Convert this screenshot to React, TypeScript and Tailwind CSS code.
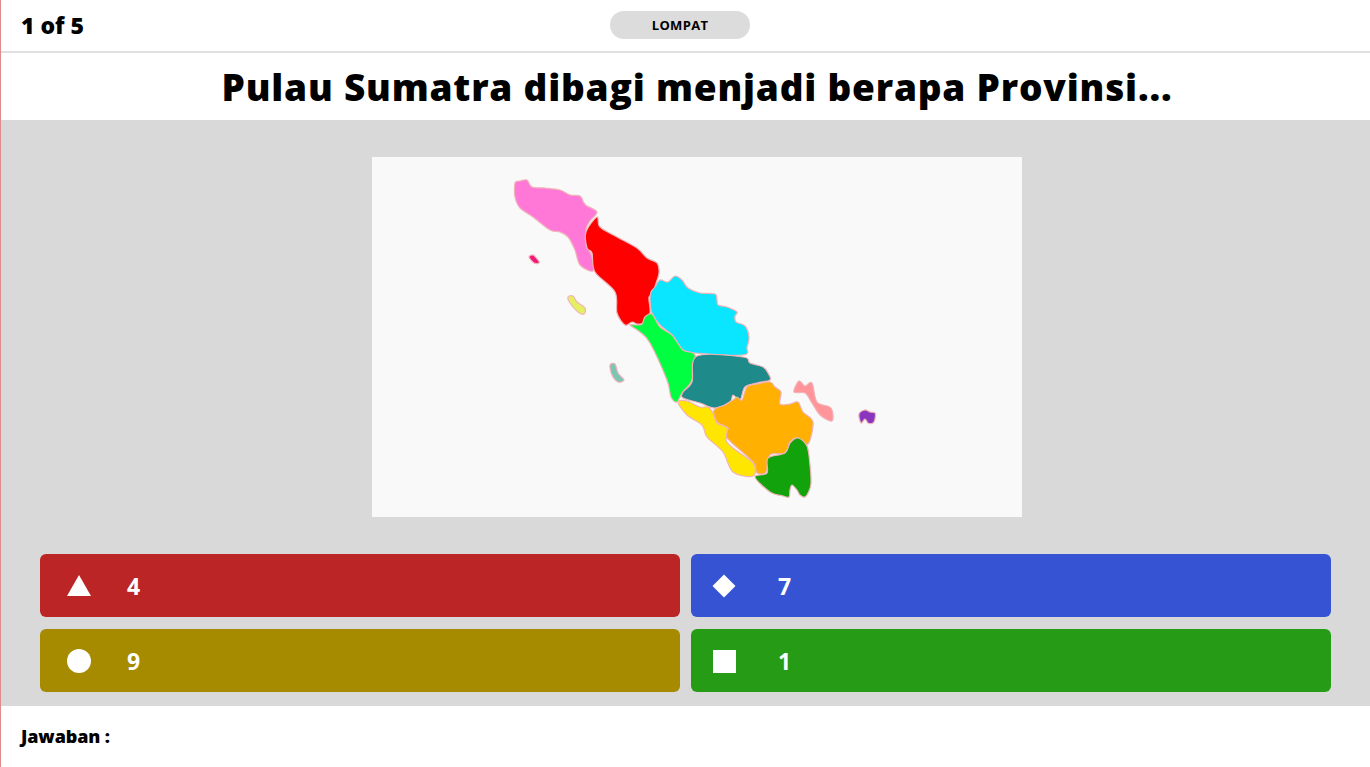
type Pt = [number, number];

// page coordinates, the svg viewBox starts at the image corner
const regions: { fill: string; pts: Pt[] }[] = [
  { fill: "#ff78d8", pts: [[515,183],[520,181],[527,180],[532,187],[545,188],[560,190],[570,195],[580,196],[584,203],[587,206],[597,212],[590,221],[586,229],[588,240],[588,248],[592,257],[593,271],[580,265],[575,250],[568,237],[560,232],[550,230],[533,217],[520,208],[515,197]] },
  { fill: "#ff0000", pts: [[597,217],[600,227],[617,237],[637,248],[647,258],[657,263],[659,273],[655,287],[655,295],[649,297],[650,313],[643,323],[637,324],[632,322],[625,325],[617,313],[615,292],[595,272],[592,253],[587,248],[586,232]] },
  { fill: "#0ae6ff", pts: [[660,280],[668,282],[675,276],[682,280],[688,288],[700,293],[715,294],[717,300],[718,305],[727,307],[737,312],[735,316],[736,322],[745,326],[749,337],[747,347],[743,355],[695,353],[683,350],[672,335],[660,325],[652,313],[650,300],[651,292],[655,287]] },
  { fill: "#00ff40", pts: [[630,325],[637,325],[642,324],[645,317],[652,314],[660,327],[672,335],[683,350],[695,355],[692,380],[682,393],[677,402],[671,397],[667,380],[650,343],[640,332]] },
  { fill: "#1f8a8a", pts: [[697,356],[743,357],[750,363],[763,367],[768,373],[770,380],[757,383],[745,387],[740,400],[733,395],[730,402],[715,408],[700,403],[683,398],[683,392],[692,382]] },
  { fill: "#ffb000", pts: [[770,382],[775,387],[781,392],[780,404],[790,404],[798,402],[803,412],[813,422],[808,444],[798,438],[790,442],[785,453],[770,455],[766,472],[757,473],[753,462],[732,443],[725,435],[728,428],[717,422],[714,410],[725,405],[733,400],[737,397],[742,400],[747,387],[757,384]] },
  { fill: "#ffe600", pts: [[678,402],[687,401],[700,407],[708,407],[713,413],[717,423],[727,428],[726,440],[733,448],[753,463],[753,476],[733,472],[723,452],[707,437],[702,425],[687,415]] },
  { fill: "#12a30c", pts: [[755,477],[767,473],[768,458],[785,453],[790,443],[798,438],[807,446],[810,465],[811,483],[809,491],[805,497],[800,495],[797,490],[792,485],[790,490],[789,497],[783,496],[770,492]] },
  { fill: "#ff9499", pts: [[794,392],[799,381],[805,386],[812,383],[817,402],[831,408],[832,421],[820,415],[812,403],[805,393]] },
  { fill: "#8a35c0", pts: [[859,414],[865,410],[870,412],[875,413],[875,419],[873,423],[868,423],[865,419],[861,423]] },
  { fill: "#7cc4b4", pts: [[610,365],[615,364],[618,373],[624,380],[618,382],[612,375]] },
  { fill: "#e4f060", pts: [[568,297],[573,296],[577,302],[585,308],[584,314],[578,312],[570,303]] },
  { fill: "#f0197a", pts: [[529,257],[533,255],[538,260],[539,263],[534,263]] },
];

// closed catmull-rom through the traced points
function smooth(p: Pt[]) {
  const n = p.length;
  let d = `M${p[0][0]} ${p[0][1]}`;
  for (let i = 0; i < n; i++) {
    const a = p[(i - 1 + n) % n];
    const b = p[i];
    const c = p[(i + 1) % n];
    const e = p[(i + 2) % n];
    const k = 0.16;
    d += `C${b[0] + (c[0] - a[0]) * k} ${b[1] + (c[1] - a[1]) * k} ${c[0] - (e[0] - b[0]) * k} ${c[1] - (e[1] - b[1]) * k} ${c[0]} ${c[1]}`;
  }
  return d + "Z";
}

const SumatraMap = () => (
  <svg viewBox="372 157 650 360" className="block w-[650px] h-[360px]">
    {regions.map((r, i) => (
      <path key={i} d={smooth(r.pts)} fill={r.fill} stroke="#f0b4b8" strokeWidth="1.2" strokeLinejoin="round" />
    ))}
  </svg>
);

const Triangle = () => (
  <svg viewBox="0 0 24 22" className="w-6 h-[22px]"><path d="M12 0 L24 21 L0 21 Z" fill="#fff" /></svg>
);
const Diamond = () => (
  <svg viewBox="0 0 24 24" className="w-6 h-6"><path d="M12 0.5 L23.5 12 L12 23.5 L0.5 12 Z" fill="#fff" /></svg>
);
const Circle = () => <div className="w-6 h-6 rounded-full bg-white" />;
const Square = () => <div className="w-[23px] h-[23px] bg-white" />;

const AnswerButton = ({ color, icon, label, inset, gap }: { color: string; icon: React.ReactNode; label: string; inset: string; gap: string }) => (
  <button className={`h-[63px] w-[640px] rounded-md flex items-center text-white font-bold text-[23px] ${inset} ${color}`}>
    <span className="w-6 flex justify-center">{icon}</span>
    <span className={gap}>{label}</span>
  </button>
);

const App = () => {
  return (
    <main className="h-[767px] w-full flex flex-col bg-white border-l border-[#e08c8c] overflow-hidden font-['Open_Sans',sans-serif] text-black">
      <div className="h-[53px] shrink-0 flex items-center relative border-b-2 border-[#e0e0e0] pl-5">
        <span className="font-extrabold text-[23px] -mt-[1px]">1 of 5</span>
        <div className="absolute left-[609px] top-[11px] w-[140px] h-7 pt-[2px] rounded-full bg-[#dcdcdc] flex items-center justify-center text-[13px] font-bold tracking-wide">LOMPAT</div>
      </div>

      <div className="h-[67px] shrink-0 flex items-center justify-center pl-[23px]">
        <h1 className="font-extrabold text-[37px] tracking-[0.8px]">Pulau Sumatra dibagi menjadi berapa Provinsi...</h1>
      </div>

      <div className="flex-1 bg-[#d9d9d9] flex flex-col items-center pt-[37px]">
        <div className="ml-[22px] w-[650px] h-[360px] bg-[#f9f9f9]">
          <SumatraMap />
        </div>
        <div className="mt-[37px] grid grid-cols-[640px_640px] gap-x-[11px] gap-y-3 self-start ml-[39px]">
          <AnswerButton color="bg-[#bb2525]" icon={<Triangle />} label="4" inset="pl-[27px] pt-[1px]" gap="ml-[36px]" />
          <AnswerButton color="bg-[#3653d4]" icon={<Diamond />} label="7" inset="pl-[21px] pt-[1px]" gap="ml-[42px]" />
          <AnswerButton color="bg-[#a68a00]" icon={<Circle />} label="9" inset="pl-[27px] pt-[1px]" gap="ml-[36px]" />
          <AnswerButton color="bg-[#269c16]" icon={<Square />} label="1" inset="pl-[21px] pt-[1px]" gap="ml-[42px]" />
        </div>
      </div>

      <div className="h-[61px] shrink-0 flex items-center pl-5 pb-[1px]">
        <span className="font-extrabold text-lg tracking-[-0.1px]">Jawaban :</span>
      </div>
    </main>
  );
};

export default App;
